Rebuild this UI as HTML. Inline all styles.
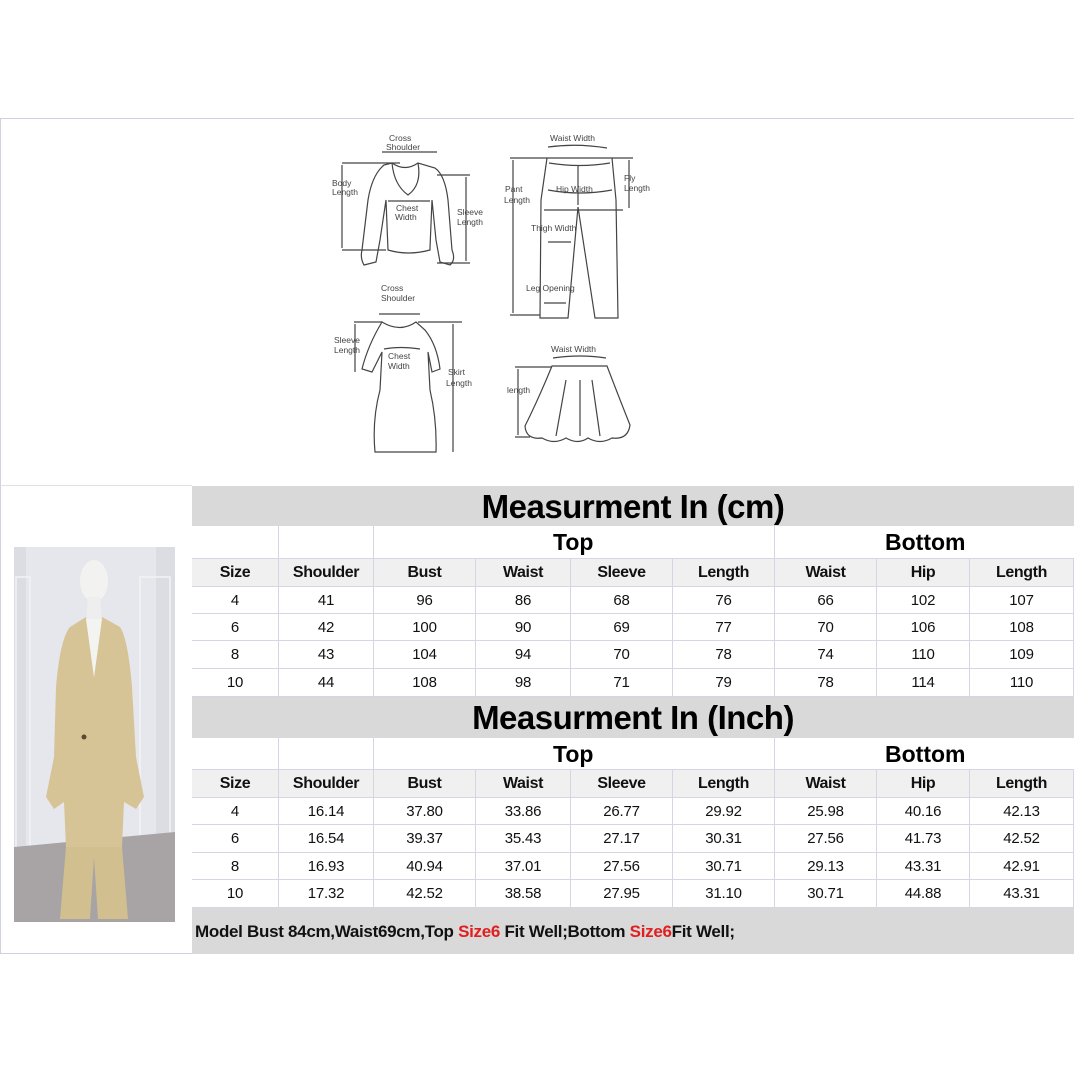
<!DOCTYPE html>
<html><head><meta charset="utf-8"><style>
*{margin:0;padding:0;box-sizing:border-box}
body{width:1074px;height:1074px;background:#fff;position:relative;overflow:hidden;font-family:"Liberation Sans",Arial,sans-serif}
.abs{position:absolute}
.row{position:absolute;left:192px;width:882px;display:flex}
.row div{border-right:1px solid #d4d6e4;border-bottom:1px solid #d4d6e4;text-align:center;color:#111}
.c1{width:87px}.c2{width:95px}.c3{width:102px}.c4{width:95px}.c5{width:102px}.c6{width:102px}.c7{width:102px}.c8{width:93px}.c9{width:104px}
.hdr div{background:#f0f0f0;font-weight:bold;font-size:16px;letter-spacing:-0.4px}
.dat div{background:#fff;font-size:15px;letter-spacing:-0.2px}
.title{position:absolute;left:192px;width:882px;background:#d9d9d9;text-align:center;font-weight:bold;font-size:33px;color:#000;letter-spacing:-0.5px}
.grp{position:absolute;left:192px;width:882px;height:33px;background:#fff}
.grp span{position:absolute;top:3px;font-weight:bold;font-size:23px}
</style></head><body>
<div class="abs" style="left:0;top:118px;width:1074px;height:367px;border-top:1px solid #d0d2e0;border-left:1px solid #d0d2e0"></div>
<div class="abs" style="left:0;top:485px;width:192px;height:469px;border-left:1px solid #d0d2e0;border-bottom:1px solid #d0d2e0;border-top:1px solid #e0e0e8"></div>

<svg class="abs" style="left:0;top:0" width="1074" height="485" viewBox="0 0 1074 485" fill="none" stroke="#444" stroke-width="1.2" font-family="Liberation Sans" font-size="8.5">
<g fill="#444" stroke="none">
<text x="389" y="141">Cross</text><text x="386" y="150">Shoulder</text>
<text x="332" y="186">Body</text><text x="332" y="195">Length</text>
<text x="396" y="211">Chest</text><text x="395" y="220">Width</text>
<text x="457" y="215">Sleeve</text><text x="457" y="225">Length</text>
<text x="550" y="141">Waist Width</text>
<text x="505" y="192">Pant</text><text x="504" y="203">Length</text>
<text x="556" y="192">Hip Width</text>
<text x="624" y="181">Fly</text><text x="624" y="191">Length</text>
<text x="531" y="231">Thigh Width</text>
<text x="526" y="291">Leg Opening</text>
<text x="381" y="291">Cross</text><text x="381" y="301">Shoulder</text>
<text x="334" y="343">Sleeve</text><text x="334" y="353">Length</text>
<text x="388" y="359">Chest</text><text x="388" y="369">Width</text>
<text x="448" y="375">Skirt</text><text x="446" y="386">Length</text>
<text x="551" y="352">Waist Width</text>
<text x="507" y="393">length</text>
</g>
<path d="M384 165 L392 163 Q405 172 418 163 L435 168 Q445 175 448 200 L452 250 Q456 260 450 265 L440 262 L436 240 L432 200 L430 248 L430 250 Q408 256 388 250 L386 200 L380 240 L376 262 L364 265 Q360 258 362 250 L368 200 Q372 175 384 165Z"/>
<path d="M392 163 Q394 185 408 195 Q422 185 418 163"/>
<path d="M342 163 L400 163 M342 250 L386 250 M342 165 L342 248 M382 152 L437 152 M437 175 L470 175 M437 263 L470 263 M466 177 L466 261 M388 201 L430 201"/>
<path d="M547 158 L612 158 L616 200 L618 318 L595 318 L578 207 L568 318 L540 318 L541 200 Z"/>
<path d="M549 163 Q580 168 610 163 M578 165 L578 205 M548 190 Q580 196 612 190 M544 210 L623 210"/>
<path d="M510 158 L547 158 M510 315 L540 315 M513 160 L513 313 M612 158 L633 158 M629 160 L629 208 M548 147 Q577 143 607 148 M548 242 L571 242 M544 303 L566 303"/>
<path d="M382 322 Q400 333 416 322 L425 330 Q437 345 440 369 L432 372 L428 352 L430 390 Q437 420 436 452 L375 452 Q372 420 380 390 L382 352 L372 372 L362 369 Q368 345 382 322Z"/>
<path d="M379 314 L420 314 M354 322 L382 322 M418 322 L462 322 M355 324 L355 372 M453 324 L453 452 M384 349 Q400 346 420 349"/>
<path d="M552 366 L607 366 Q620 400 630 425 Q628 440 612 438 Q600 445 588 438 Q578 445 566 438 Q554 445 542 438 Q526 440 525 426 Q538 400 552 366Z"/>
<path d="M553 358 Q580 354 606 358 M515 367 L552 367 M515 437 L530 437 M518 369 L518 435 M566 380 L556 436 M592 380 L600 436 M580 380 L580 436"/>
</svg>

<svg class="abs" style="left:14px;top:547px" width="161" height="375" viewBox="0 0 161 375">
<rect width="161" height="375" fill="#dcdde3"/>
<rect x="12" y="0" width="130" height="300" fill="#e6e7ec"/>
<rect x="2" y="30" width="14" height="290" fill="none" stroke="#f3f3f5" stroke-width="1.5"/>
<rect x="126" y="30" width="30" height="290" fill="none" stroke="#f3f3f5" stroke-width="1.5"/>
<path d="M0 300 L161 285 L161 375 L0 375Z" fill="#a8a4a6"/>
<ellipse cx="80" cy="34" rx="14" ry="21" fill="#f2f2f0"/>
<path d="M74 50 L86 50 L88 75 L72 75Z" fill="#eeeeee"/>
<path d="M56 80 L72 70 L80 130 L88 70 L106 80 Q114 92 118 140 L122 210 L130 250 L122 262 L110 255 L108 300 L52 300 L50 255 L40 262 L32 250 L40 210 L42 140 Q46 92 56 80Z" fill="#d6c496"/>
<path d="M52 300 L108 300 L114 372 L84 372 L80 310 L76 372 L46 372Z" fill="#d2bf8f"/>
<path d="M72 72 L80 130 L88 72Z" fill="#f3f3f2"/>
<circle cx="70" cy="190" r="2.5" fill="#5a4a30"/>
</svg>

<div class="title" style="top:486px;height:40px;line-height:42px">Measurment In (cm)</div>
<div class="grp" style="top:526px;border-bottom:1px solid #d4d6e4">
<div class="abs" style="left:86px;top:0;height:33px;border-left:1px solid #d4d6e4"></div>
<div class="abs" style="left:181px;top:0;height:33px;border-left:1px solid #d4d6e4"></div>
<div class="abs" style="left:582px;top:0;height:33px;border-left:1px solid #d4d6e4"></div>
<span style="left:361px">Top</span><span style="left:693px">Bottom</span></div>
<div class="row hdr" style="top:559px;height:28px;line-height:28px"><div class="c1">Size</div><div class="c2">Shoulder</div><div class="c3">Bust</div><div class="c4">Waist</div><div class="c5">Sleeve</div><div class="c6">Length</div><div class="c7">Waist</div><div class="c8">Hip</div><div class="c9">Length</div></div>
<div class="row dat" style="top:587px;height:27px;line-height:27px"><div class="c1">4</div><div class="c2">41</div><div class="c3">96</div><div class="c4">86</div><div class="c5">68</div><div class="c6">76</div><div class="c7">66</div><div class="c8">102</div><div class="c9">107</div></div>
<div class="row dat" style="top:614px;height:27px;line-height:27px"><div class="c1">6</div><div class="c2">42</div><div class="c3">100</div><div class="c4">90</div><div class="c5">69</div><div class="c6">77</div><div class="c7">70</div><div class="c8">106</div><div class="c9">108</div></div>
<div class="row dat" style="top:641px;height:28px;line-height:28px"><div class="c1">8</div><div class="c2">43</div><div class="c3">104</div><div class="c4">94</div><div class="c5">70</div><div class="c6">78</div><div class="c7">74</div><div class="c8">110</div><div class="c9">109</div></div>
<div class="row dat" style="top:669px;height:28px;line-height:28px"><div class="c1">10</div><div class="c2">44</div><div class="c3">108</div><div class="c4">98</div><div class="c5">71</div><div class="c6">79</div><div class="c7">78</div><div class="c8">114</div><div class="c9">110</div></div>

<div class="title" style="top:697px;height:41px;line-height:42px">Measurment In (Inch)</div>
<div class="grp" style="top:738px;height:32px;border-bottom:1px solid #d4d6e4">
<div class="abs" style="left:86px;top:0;height:32px;border-left:1px solid #d4d6e4"></div>
<div class="abs" style="left:181px;top:0;height:32px;border-left:1px solid #d4d6e4"></div>
<div class="abs" style="left:582px;top:0;height:32px;border-left:1px solid #d4d6e4"></div>
<span style="left:361px">Top</span><span style="left:693px">Bottom</span></div>
<div class="row hdr" style="top:770px;height:28px;line-height:28px"><div class="c1">Size</div><div class="c2">Shoulder</div><div class="c3">Bust</div><div class="c4">Waist</div><div class="c5">Sleeve</div><div class="c6">Length</div><div class="c7">Waist</div><div class="c8">Hip</div><div class="c9">Length</div></div>
<div class="row dat" style="top:798px;height:27px;line-height:27px"><div class="c1">4</div><div class="c2">16.14</div><div class="c3">37.80</div><div class="c4">33.86</div><div class="c5">26.77</div><div class="c6">29.92</div><div class="c7">25.98</div><div class="c8">40.16</div><div class="c9">42.13</div></div>
<div class="row dat" style="top:825px;height:28px;line-height:28px"><div class="c1">6</div><div class="c2">16.54</div><div class="c3">39.37</div><div class="c4">35.43</div><div class="c5">27.17</div><div class="c6">30.31</div><div class="c7">27.56</div><div class="c8">41.73</div><div class="c9">42.52</div></div>
<div class="row dat" style="top:853px;height:27px;line-height:27px"><div class="c1">8</div><div class="c2">16.93</div><div class="c3">40.94</div><div class="c4">37.01</div><div class="c5">27.56</div><div class="c6">30.71</div><div class="c7">29.13</div><div class="c8">43.31</div><div class="c9">42.91</div></div>
<div class="row dat" style="top:880px;height:28px;line-height:28px"><div class="c1">10</div><div class="c2">17.32</div><div class="c3">42.52</div><div class="c4">38.58</div><div class="c5">27.95</div><div class="c6">31.10</div><div class="c7">30.71</div><div class="c8">44.88</div><div class="c9">43.31</div></div>

<div class="abs" style="left:192px;top:908px;width:882px;height:46px;background:#d9d9d9;font-weight:bold;font-size:17px;line-height:48px;padding-left:3px;color:#111;letter-spacing:-0.3px">Model Bust 84cm,Waist69cm,Top <span style="color:#e02020">Size6</span> Fit Well;Bottom <span style="color:#e02020">Size6</span>Fit Well;</div>
</body></html>
